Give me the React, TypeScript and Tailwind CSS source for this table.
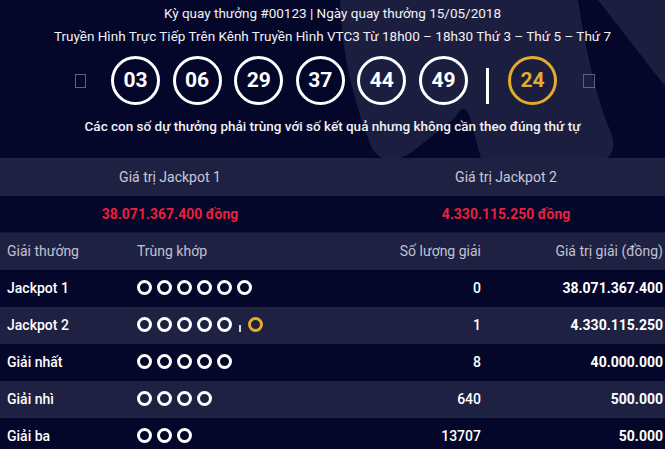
import React from "react";

const balls = ["03", "06", "29", "37", "44", "49"];

function Rings({ n, gold }: { n: number; gold?: boolean }) {
  return (
    <div className="flex items-center gap-[5px]">
      {Array.from({ length: n }).map((_, i) => (
        <span key={i} className="block w-[15px] h-[15px] rounded-full border-[3px] border-white" />
      ))}
      {gold && (
        <>
          <span className="block w-[2px] h-[7px] bg-[#d6d8ee] mt-[7px] mx-[2px]" />
          <span className="block w-[15px] h-[15px] rounded-full border-[3px] border-[#e1ad2b]" />
        </>
      )}
    </div>
  );
}

const rows = [
  { name: "Jackpot 1", n: 6, gold: false, count: "0", value: "38.071.367.400" },
  { name: "Jackpot 2", n: 5, gold: true, count: "1", value: "4.330.115.250" },
  { name: "Giải nhất", n: 5, gold: false, count: "8", value: "40.000.000" },
  { name: "Giải nhì", n: 4, gold: false, count: "640", value: "500.000" },
  { name: "Giải ba", n: 3, gold: false, count: "13707", value: "50.000" },
];

export default function App() {
  return (
    <div
      className="w-[665px] h-[449px] overflow-hidden bg-[#04062a] text-white"
      style={{ fontFamily: "Roboto, 'Noto Sans', sans-serif" }}
    >
      {/* Hero */}
      <div className="relative h-[158px] overflow-hidden">
        <svg className="absolute inset-0" width="665" height="158" viewBox="0 0 665 158">
          <path
            d="M340,0 L578,0 C584,40 596,100 611,132 Q620,158 596,162 L482,162 L470,118 Q464,100 455,118 L412,152 Q385,170 372,148 C356,108 342,60 340,0 Z"
            fill="#1c1e40"
          />
          <path d="M598,0 L665,0 L665,86 Z" fill="#1c1e40" />
        </svg>
        <div className="relative flex flex-col items-center">
          <div className="mt-[5px] text-[13.5px] leading-[17px] text-[#f2f2f6]">
            Kỳ quay thưởng #00123 | Ngày quay thưởng 15/05/2018
          </div>
          <div className="mt-[6px] text-[13.5px] leading-[17px] text-[#f2f2f6]">
            Truyền Hình Trực Tiếp Trên Kênh Truyền Hình VTC3 Từ 18h00 – 18h30 Thứ 3 – Thứ 5 – Thứ 7
          </div>
          <div className="mt-[11px] flex items-center h-[49px] w-[665px] pl-[75px]">
            <span className="block w-[11px] h-[14px] border border-[#5d6080] mr-[25px]" />
            <div className="flex items-center gap-[12.6px]">
              {balls.map((b) => (
                <div
                  key={b}
                  className="w-[49px] h-[49px] rounded-full border-[3px] border-white flex items-center justify-center text-[21px] font-bold"
                >
                  {b}
                </div>
              ))}
            </div>
            <span className="block w-[3px] h-[36px] bg-white ml-[18px] mr-[19px] mt-[10px]" />
            <div className="w-[49px] h-[49px] rounded-full border-[3px] border-[#e1ad2b] flex items-center justify-center text-[21px] font-bold text-[#e1ad2b]">
              24
            </div>
            <span className="block w-[12px] h-[14px] border border-[#5d6080] ml-[26px]" />
          </div>
          <div className="mt-[13px] text-[13.5px] leading-[17px] font-medium text-[#f2f2f6]">
            Các con số dự thưởng phải trùng với số kết quả nhưng không cần theo đúng thứ tự
          </div>
        </div>
      </div>

      {/* Jackpot values */}
      <div className="grid grid-cols-[340px_332px] h-[38px] items-center bg-[#1f2142] text-[14px] text-[#c8c9d8]">
        <div className="text-center">Giá trị Jackpot 1</div>
        <div className="text-center">Giá trị Jackpot 2</div>
      </div>
      <div className="grid grid-cols-[340px_332px] h-[37px] items-center bg-[#04062a] text-[14px] font-bold text-[#e8203c] border-b border-[#15173a]">
        <div className="text-center">38.071.367.400 đồng</div>
        <div className="text-center">4.330.115.250 đồng</div>
      </div>

      {/* Table */}
      <div className="grid grid-cols-[130px_225px_126px_184px] h-[37px] items-center bg-[#1f2142] text-[14px] text-[#c0c2d2]">
        <div className="pl-[7px]">Giải thưởng</div>
        <div className="pl-[7px]">Trùng khớp</div>
        <div className="text-right">Số lượng giải</div>
        <div className="text-right pr-[2px]">Giá trị giải (đồng)</div>
      </div>
      {rows.map((r, i) => (
        <div
          key={r.name}
          className={`grid grid-cols-[130px_225px_126px_184px] h-[37px] items-center text-[14px] ${
            i % 2 === 0 ? "bg-[#04062a]" : "bg-[#1f2142]"
          }`}
        >
          <div className="pl-[7px] font-medium">{r.name}</div>
          <div className="pl-[7px] -mt-[2px]">
            <Rings n={r.n} gold={r.gold} />
          </div>
          <div className="text-right font-medium">{r.count}</div>
          <div className="text-right pr-[2px] font-bold">{r.value}</div>
        </div>
      ))}
    </div>
  );
}
